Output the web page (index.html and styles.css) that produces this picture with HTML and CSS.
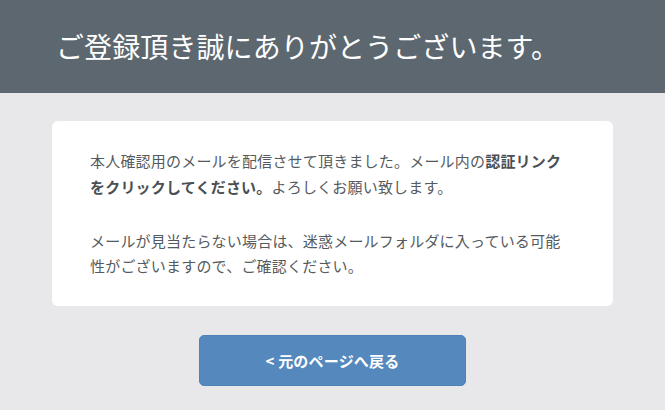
FILE: index.html
```html
<!DOCTYPE html>
<html lang="ja">
<head>
<meta charset="utf-8">
<title>ご登録頂き誠にありがとうございます。</title>
<link rel="stylesheet" href="styles.css">
</head>
<body>
<header class="hero">
  <h1 class="hero-title">ご登録頂き誠にありがとうございます。</h1>
</header>
<main class="main">
  <section class="card">
    <p class="card-text">本人確認用のメールを配信させて頂きました。メール内の<strong>認証リンクをクリックしてください。</strong>よろしくお願い致します。</p>
    <p class="card-text">メールが見当たらない場合は、迷惑メールフォルダに入っている可能性がございますので、ご確認ください。</p>
  </section>
  <a class="back-btn" href="#">&lt; 元のページへ戻る</a>
</main>
</body>
</html>
```

FILE: styles.css
```css
html, body {
  margin: 0;
  padding: 0;
}
body {
  background: #e8e8ea;
  font-family: "Noto Sans CJK JP", "Noto Sans", "Liberation Sans", sans-serif;
  color: #555a5e;
  height: 410px;
  overflow: hidden;
}
.hero {
  background: #5c6770;
  height: 93px;
  display: flex;
  align-items: center;
  padding: 0 0 0 56px;
  box-sizing: border-box;
}
.hero-title {
  margin: 0;
  color: #ffffff;
  font-size: 28px;
  font-weight: 400;
  letter-spacing: 0.1px;
  line-height: 1;
  position: relative;
  top: -1px;
}
.main {
  display: flex;
  flex-direction: column;
  align-items: center;
  padding-top: 28px;
}
.card {
  width: 561px;
  box-sizing: border-box;
  background: #ffffff;
  border-radius: 6px;
  padding: 27px 42px 27px 38px;
}
.card-text {
  margin: 0;
  font-size: 15px;
  line-height: 25.5px;
  letter-spacing: 0.2px;
  color: #555a5e;
}
.card-text + .card-text {
  margin-top: 28.5px;
}
.card-text strong {
  font-weight: 700;
  color: #4a4f53;
}
.back-btn {
  margin-top: 29px;
  width: 267px;
  height: 51px;
  box-sizing: border-box;
  display: flex;
  align-items: center;
  justify-content: center;
  background: #5589be;
  border: 1px solid #4f82b6;
  border-radius: 5px;
  color: #ffffff;
  font-size: 15px;
  font-weight: 700;
  text-decoration: none;
  letter-spacing: 0.2px;
}
```
